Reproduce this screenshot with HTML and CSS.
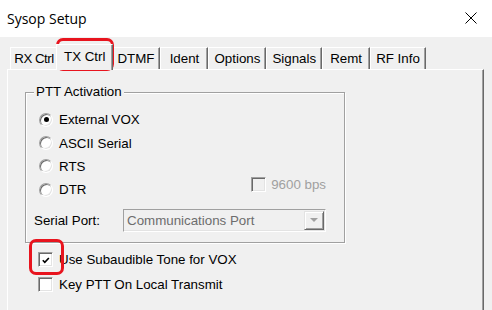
FILE: index.html
```html
<!DOCTYPE html>
<html>
<head>
<meta charset="utf-8">
<link rel="stylesheet" href="styles.css">
</head>
<body>
<div class="window">
  <div class="titlebar">
    <span class="title">Sysop Setup</span>
    <svg class="close" width="12" height="12" viewBox="0 0 12 12"><path d="M0.5 0.5 L11.5 11.5 M11.5 0.5 L0.5 11.5" stroke="#000" stroke-width="1" fill="none"/></svg>
  </div>
  <div class="client">
    <div class="tabs">
      <div class="tab tab-first">RX Ctrl</div>
      <div class="tab active">TX Ctrl</div>
      <div class="tab">DTMF</div>
      <div class="tab">Ident</div>
      <div class="tab">Options</div>
      <div class="tab">Signals</div>
      <div class="tab">Remt</div>
      <div class="tab">RF Info</div>
    </div>
    <div class="panel">
      <div class="group">
        <span class="legend">PTT Activation</span>
        <div class="row"><span class="radio checked"></span><span>External VOX</span></div>
        <div class="row"><span class="radio"></span><span>ASCII Serial</span></div>
        <div class="row"><span class="radio"></span><span>RTS</span></div>
        <div class="row row-dtr"><span class="radio"></span><span>DTR</span>
          <span class="baud"><span class="check disabled"></span><span class="disabled-text">9600 bps</span></span>
        </div>
        <div class="port-row">
          <span class="port-label">Serial Port:</span>
          <div class="combo"><span class="combo-text">Communications Port</span><span class="combo-btn"><span class="arrow"></span></span></div>
        </div>
      </div>
      <div class="crow crow-first"><span class="check"><svg width="13" height="13" viewBox="0 0 13 13"><path d="M3 6.2 L5.2 8.4 L9.6 3.8" stroke="#000" stroke-width="1.8" fill="none"/></svg></span><span>Use Subaudible Tone for VOX</span></div>
      <div class="crow"><span class="check"></span><span>Key PTT On Local Transmit</span></div>
    </div>
  </div>
  <div class="mark mark-tab"></div>
  <div class="mark mark-check"></div>
</div>
</body>
</html>
```
FILE: styles.css
```css
html, body {
  margin: 0;
  padding: 0;
}
body {
  width: 492px;
  height: 310px;
  overflow: hidden;
  font-family: "Liberation Sans", Arial, sans-serif;
  font-size: 13.33px;
  color: #000;
  background: #f0f0f0;
}
.window {
  position: relative;
  width: 492px;
  height: 310px;
}
.titlebar {
  height: 37px;
  background: #fff;
  display: flex;
  align-items: center;
  justify-content: space-between;
  padding: 0 15px 0 7px;
  box-sizing: border-box;
}
.title {
  font-family: "Open Sans", "Noto Sans", sans-serif;
  font-size: 14px;
  color: #000;
  margin-top: -1px;
}
.close {
  display: block;
  margin-top: -1px;
}
.client {
  height: 273px;
  background: #f0f0f0;
  padding: 7px 0 0 7px;
  box-sizing: border-box;
}
.tabs {
  display: flex;
  align-items: flex-end;
  height: 25px;
  padding-left: 3px;
}
.tab {
  height: 22px;
  min-width: 48px;
  box-sizing: border-box;
  padding: 0 5px 1px;
  border: 1px solid #fff;
  border-right-color: #696969;
  border-bottom: none;
  box-shadow: inset -1px 0 0 #a0a0a0;
  display: flex;
  align-items: center;
  justify-content: center;
  white-space: nowrap;
  background: #f0f0f0;
}
.tab.tab-first {
  padding: 0 3px 1px 3px;
  letter-spacing: -0.5px;
}
.tab.active {
  height: 26px;
  margin: 0 -2px -1px;
  padding: 0 7px 3px;
  position: relative;
  z-index: 1;
}
.panel {
  width: 477px;
  height: 241px;
  box-sizing: border-box;
  border-top: 1px solid #fff;
  border-left: 1px solid #fff;
  border-right: 1px solid #696969;
  box-shadow: inset -1px 0 0 #a0a0a0;
  padding: 22px 0 0 17px;
}
.group {
  position: relative;
  width: 320px;
  height: 151px;
  box-sizing: border-box;
  border: 1px solid #a0a0a0;
  box-shadow: 1px 1px 0 #fff, inset 1px 1px 0 #fff;
  padding: 15px 18px 0 13px;
}
.legend {
  position: absolute;
  left: 8px;
  top: -9px;
  padding: 0 2px;
  background: #f0f0f0;
  line-height: 16px;
}
.row {
  height: 23.4px;
  display: flex;
  align-items: center;
}
.radio {
  width: 14px;
  height: 14px;
  box-sizing: border-box;
  border-radius: 50%;
  border: 1px solid;
  border-color: #a0a0a0 #fff #fff #a0a0a0;
  box-shadow: inset 1px 1px 0 #696969, inset -1px -1px 0 #e3e3e3;
  background: #fff;
  margin-right: 6px;
  position: relative;
  flex: none;
}
.radio.checked::after {
  content: "";
  position: absolute;
  left: 3.5px;
  top: 3.5px;
  width: 5px;
  height: 5px;
  border-radius: 50%;
  background: #000;
}
.baud {
  margin-left: auto;
  display: flex;
  align-items: center;
  align-self: flex-start;
  margin-top: -1px;
}
.check {
  width: 15px;
  height: 15px;
  box-sizing: border-box;
  border: 1px solid;
  border-color: #a0a0a0 #fff #fff #a0a0a0;
  box-shadow: inset 1px 1px 0 #696969, inset -1px -1px 0 #e3e3e3;
  background: #fff;
  margin-right: 6px;
  flex: none;
  display: flex;
  align-items: center;
  justify-content: center;
}
.check svg {
  display: block;
  margin: 1px 0 0 1px;
}
.check.disabled {
  background: #f0f0f0;
  margin-right: 5px;
}
.disabled-text {
  color: #a0a0a0;
}
.port-row {
  display: flex;
  align-items: center;
  margin: 7px 0 0 -5px;
}
.port-label {
  width: 89px;
  flex: none;
}
.combo {
  width: 207px;
  height: 23px;
  box-sizing: border-box;
  border: 1px solid;
  border-color: #a0a0a0 #fff #fff #a0a0a0;
  box-shadow: inset -1px -1px 0 #e3e3e3;
  display: flex;
  align-items: center;
  justify-content: space-between;
  padding: 1px 1px 1px 3px;
  background: #f0f0f0;
}
.combo-text {
  color: #6d6d6d;
}
.combo-btn {
  width: 20px;
  height: 19px;
  box-sizing: border-box;
  border: 1px solid;
  border-color: #e3e3e3 #696969 #696969 #e3e3e3;
  box-shadow: inset 1px 1px 0 #fff, inset -1px -1px 0 #a0a0a0;
  display: flex;
  align-items: center;
  justify-content: center;
}
.arrow {
  width: 0;
  height: 0;
  border-left: 4px solid transparent;
  border-right: 4px solid transparent;
  border-top: 4px solid #a0a0a0;
}
.crow {
  display: flex;
  align-items: center;
  height: 25px;
  padding-left: 13px;
}
.crow.crow-first {
  margin-top: 4px;
}
.mark {
  position: absolute;
  box-sizing: border-box;
  border: 3px solid #e8141e;
  border-radius: 7px;
}
.mark-tab {
  left: 56px;
  top: 38px;
  width: 58px;
  height: 33px;
}
.mark-check {
  left: 29px;
  top: 239px;
  width: 35px;
  height: 36px;
}
```
